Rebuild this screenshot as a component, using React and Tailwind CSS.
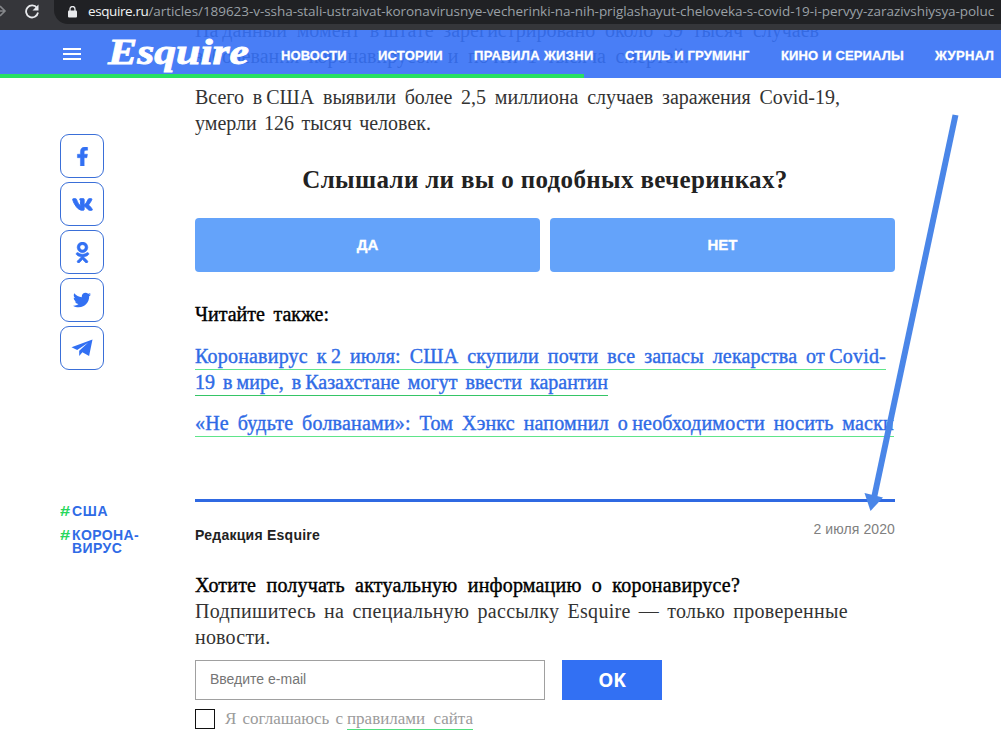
import React from 'react';
import clsx from 'clsx';
import { FaFacebookF, FaVk, FaOdnoklassniki, FaTwitter } from 'react-icons/fa';

const NAV = [
  { label: 'НОВОСТИ', width: 'w-[97px] tracking-[0.1px]' },
  { label: 'ИСТОРИИ', width: 'w-[96px] tracking-[0.2px]' },
  { label: 'ПРАВИЛА ЖИЗНИ', width: 'w-[151px] tracking-[0.35px]' },
  { label: 'СТИЛЬ И ГРУМИНГ', width: 'w-[156px] tracking-[0.15px]' },
  { label: 'КИНО И СЕРИАЛЫ', width: 'w-[154px] tracking-[0.15px]' },
  { label: 'ЖУРНАЛ', width: 'w-[66px] tracking-[0.4px]' },
];

const PlaneIcon = ({ className }) => (
  <svg className={className} viewBox="0 0 22 18" fill="currentColor">
    <path d="M21.5 0.5L0.5 8.3l5.7 2.6L17 3.7 8.200 11.7v5.3l3.200-3.700 6.700 3.700z" />
  </svg>
);

const SOCIALS = [
  { name: 'facebook', Icon: FaFacebookF, size: 'h-[19px] w-[19px] stroke-current stroke-[14]' },
  { name: 'vk', Icon: FaVk, size: 'h-[21px] w-[21px] stroke-current stroke-[26]' },
  { name: 'ok', Icon: FaOdnoklassniki, size: 'h-[21px] w-[21px] stroke-current stroke-[14]' },
  { name: 'twitter', Icon: FaTwitter, size: 'h-[18px] w-[18px]' },
  { name: 'telegram', Icon: PlaneIcon, size: 'h-[18px] w-[22px]' },
];

// One justified line of article text
const Line = ({ className, children }) => (
  <span className={clsx('block whitespace-nowrap [text-align-last:justify]', className)}>{children}</span>
);

const BrowserBar = () => (
  <div className="relative z-20 flex h-[30px] bg-[#35363a]">
    <div className="flex h-[22px] w-[54px] shrink-0 items-center gap-[16px]">
      <svg className="h-4 w-[8px] shrink-0" viewBox="0 0 8 16" fill="none" stroke="#85878a" strokeWidth="1.6">
        <path d="M0 8h5M0 3l5 5-5 5" />
      </svg>
      <svg className="h-4 w-4 shrink-0" viewBox="0 0 16 16" fill="none">
        <path d="M13 5A6 6 0 1 0 14 9.5" stroke="#e8eaed" strokeWidth="1.8" />
        <path d="M14.5 1.5v6h-6z" fill="#e8eaed" />
      </svg>
    </div>
    <div className="flex h-6 flex-1 items-center overflow-hidden rounded-bl-[14px] bg-[#202124] pl-[14px]">
      <svg className="mr-[11px] h-[12px] w-[9px] shrink-0" viewBox="0 0 9 12">
        <rect y="4.5" width="9" height="7" rx="1" fill="#e8eaed" />
        <path d="M2 5V3a2.5 2.5 0 0 1 5 0v2" fill="none" stroke="#e8eaed" strokeWidth="1.3" />
      </svg>
      <span className="whitespace-nowrap pb-[1px] font-['Open_Sans'] text-[13.5px] tracking-[-0.05px] text-[#9aa0a6]">
        <span className="tracking-[-0.4px] text-[#f1f3f4]">esquire.ru</span>
        /articles/189623-v-ssha-stali-ustraivat-koronavirusnye-vecherinki-na-nih-priglashayut-cheloveka-s-covid-19-i-pervyy-zarazivshiysya-poluc
      </span>
    </div>
  </div>
);

const SiteHeader = () => (
  <header className="relative z-10 h-12 bg-[#3570f5]/90">
    <div className="flex h-[46px] items-center pl-[63px]">
      <div className="flex w-[18px] shrink-0 flex-col gap-[3px] pt-[2px]">
        <span className="h-[2px] bg-white" />
        <span className="h-[2px] bg-white" />
        <span className="h-[2px] bg-white" />
      </div>
      <div className="ml-[27px] w-[173px] shrink-0">
        <span className="inline-block origin-left scale-x-[1.25] font-['Liberation_Serif'] text-[35px] font-bold italic leading-[40px] text-white [-webkit-text-stroke:0.8px]">
          Esquire
        </span>
      </div>
      <nav className="flex pt-[5px] font-['Liberation_Sans'] text-[13px] font-bold text-white [-webkit-text-stroke:0.3px]">
        {NAV.map(({ label, width }) => (
          <a key={label} className={clsx('shrink-0 whitespace-nowrap', width)}>{label}</a>
        ))}
      </nav>
    </div>
    <div className="absolute bottom-0 left-0 h-1 w-[584px] bg-[#27e062]" />
  </header>
);

const Sidebar = () => (
  <aside className="w-[195px] shrink-0 pl-[60px] pt-[117px]">
    <div className="flex w-[44px] flex-col gap-1">
      {SOCIALS.map(({ name, Icon, size }) => (
        <a key={name} className="flex h-[44px] items-center justify-center rounded-[9px] border border-[#3a6fd8] text-[#3270f3]">
          <Icon className={size} />
        </a>
      ))}
    </div>
    <ul className="mt-[135px] flex flex-col gap-[11px] font-['Liberation_Sans'] text-[14px] font-bold leading-[13px] text-[#2f6be6]">
      <li className="flex gap-[2px]">
        <span className="w-[10px] origin-left scale-x-[1.3] text-[#27d75c]">#</span>
        <span className="tracking-[0.6px]">США</span>
      </li>
      <li className="flex gap-[2px]">
        <span className="w-[10px] origin-left scale-x-[1.3] text-[#27d75c]">#</span>
        <span className="tracking-[0.4px]">КОРОНА-<br />ВИРУС</span>
      </li>
    </ul>
  </aside>
);

const Poll = () => (
  <section>
    <h2 className="mt-[30px] text-center text-[25px] font-bold leading-[27px] tracking-[0.35px] text-[#222]">
      Слышали ли вы о подобных вечеринках?
    </h2>
    <div className="mt-[25px] grid grid-cols-2 gap-[10px] font-['Liberation_Sans'] text-[15px] font-bold text-white [-webkit-text-stroke:0.3px]">
      <button className="h-[54px] rounded bg-[#64a3fa]">ДА</button>
      <button className="h-[54px] rounded bg-[#64a3fa]">НЕТ</button>
    </div>
  </section>
);

const ReadAlso = () => (
  <section>
    <h3 className="mt-[29px] text-black [-webkit-text-stroke:0.4px]">
      <Line className="w-[134px]">Читайте также:</Line>
    </h3>
    <div className="mt-[17px] text-[#2f6be6] [-webkit-text-stroke:0.4px]">
      <a className="block">
        <Line className="w-[691px] border-b border-[#5fe58a] leading-[25px] tracking-[0.2px]">
          Коронавирус к{'\u2009'}2 июля: США скупили почти все запасы лекарства от{'\u2009'}Covid-
        </Line>
        <Line className="w-[413px] border-b border-[#35c566] leading-[25px]">
          19 в{'\u2009'}мире, в{'\u2009'}Казахстане могут ввести карантин
        </Line>
      </a>
      <a className="mt-[15px] block">
        <Line className="w-[699px] border-b border-[#5fe58a] leading-[25px] tracking-[0.2px]">
          «Не будьте болванами»: Том Хэнкс напомнил о{'\u2009'}необходимости носить маски
        </Line>
      </a>
    </div>
  </section>
);

const Subscribe = () => (
  <section className="mt-[29px]">
    <Line className="w-[545px] text-black tracking-[0.2px] [-webkit-text-stroke:0.4px]">
      Хотите получать актуальную информацию о коронавирусе?
    </Line>
    <Line className="w-[653px] tracking-[0.3px]">Подпишитесь на специальную рассылку Esquire — только проверенные</Line>
    <Line className="w-[75px] tracking-[0.2px]">новости.</Line>
    <div className="mt-[10px] flex gap-[17px]">
      <div className="flex h-10 w-[350px] items-center border border-[#a0a0a0] pb-[2px] pl-[14px] font-['Liberation_Sans'] text-[14px] text-[#757575]">
        Введите e-mail
      </div>
      <button className="h-10 w-[100px] bg-[#3270f3] font-['Open_Sans'] text-[19px] font-bold text-white">OK</button>
    </div>
    <div className="mt-[9px] flex gap-[10px] text-[17px] leading-5 text-[#9b9b9b]">
      <span className="h-5 w-5 border border-[#111]" />
      <span className="flex gap-[4px]">
        <Line className="w-[118px]">Я соглашаюсь с</Line>
        <Line className="w-[126px] border-b border-[#4fe07e]">правилами сайта</Line>
      </span>
    </div>
  </section>
);

const Arrow = () => (
  <svg className="pointer-events-none absolute left-[860px] top-[110px] z-10" width="105" height="405" viewBox="860 110 105 405">
    <path d="M955.5 115L874 498" stroke="#4a86e8" strokeWidth="6" />
    <path d="M864.5 493L883 497.5L870.5 511z" fill="#4a86e8" />
  </svg>
);

const App = () => (
  <div className="relative h-[734px] w-[1001px] overflow-hidden bg-white">
    <BrowserBar />
    <SiteHeader />
    <main className="-mt-[61px] flex">
      <Sidebar />
      <article className="w-[700px] shrink-0 font-['Liberation_Serif',serif] text-[20px] leading-[26px] text-[#333]">
        <p>
          <Line className="w-[624px]">На{'\u2009'}данный момент в{'\u2009'}штате зарегистрировано около 39 тысяч случаев</Line>
          <Line className="w-[494px]">заболевания коронавирусом и почти 1 тысяча смертей.</Line>
        </p>
        <p className="mt-[15px]">
          <Line className="w-[645px]">Всего в{'\u2009'}США выявили более 2,5 миллиона случаев заражения Covid-19,</Line>
          <Line className="w-[236px]">умерли 126 тысяч человек.</Line>
        </p>
        <Poll />
        <ReadAlso />
        <div className="mt-[62px] h-[3px] bg-[#2f69e2]" />
        <div className="mt-[19px] flex justify-between font-['Liberation_Sans'] text-[14px] leading-4">
          <span className="pt-[6px] font-bold tracking-[0.25px] text-[#222]">Редакция Esquire</span>
          <span className="tracking-[0.1px] text-[#808080]">2 июля 2020</span>
        </div>
        <Subscribe />
      </article>
    </main>
    <Arrow />
  </div>
);

export default App;
